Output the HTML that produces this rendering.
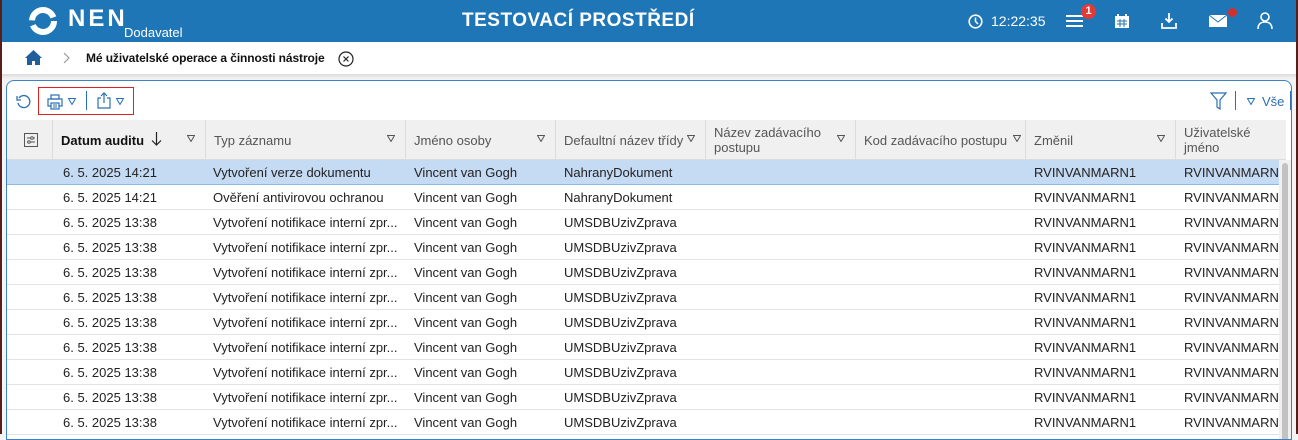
<!DOCTYPE html>
<html><head><meta charset="utf-8"><style>
*{box-sizing:border-box;margin:0;padding:0}
body{width:1298px;height:434px;overflow:hidden;background:#f4f4f4;font-family:"Liberation Sans",Arial,sans-serif;position:relative}
.edge{position:absolute;top:0;bottom:0;width:2px;background:#5a1e1a;z-index:9}
.hdr{position:absolute;left:0;top:0;width:1298px;height:42px;background:#1f76b7;color:#fff}
.bc{position:absolute;left:0;top:42px;width:1298px;height:32px;background:#fff;box-shadow:0 2px 4px rgba(0,0,0,.12)}
.panel{position:absolute;left:6px;top:80px;width:1286px;height:360px;background:#fff;border:1px solid #3d82c4;border-radius:8px 8px 0 0;overflow:hidden}
.h{position:absolute;top:39px;height:40px;background:#f0f0f0;border-right:1px solid #dcdcdc;border-bottom:1px solid #dcdcdc;font-size:13px;color:#555}
.h span{position:absolute;left:8px;top:13px}
.h svg.tri{position:absolute;right:10px;top:15px}
.row{position:absolute;left:0;width:1272px;height:25px;border-bottom:1px solid #e3e3e3}
.row span{position:absolute;top:5px;font-size:13px;color:#222;white-space:nowrap}
</style></head><body>
<div class="edge" style="left:0"></div><div class="edge" style="right:0"></div>
<div class="hdr">
 <svg style="position:absolute;left:28px;top:6px" width="30" height="30" viewBox="0 0 30 30"><circle cx="15" cy="15" r="11" fill="none" stroke="#fff" stroke-width="6" stroke-dasharray="30 5"/></svg>
 <div style="position:absolute;left:68px;top:5px;font-size:24px;font-weight:bold;letter-spacing:3px">NEN</div>
 <div style="position:absolute;left:124px;top:25px;font-size:13px">Dodavatel</div>
 <div style="position:absolute;left:462px;top:10px;font-size:19px;font-weight:bold;letter-spacing:.5px">TESTOVACÍ PROSTŘEDÍ</div>
 <svg style="position:absolute;left:968px;top:14px" width="15" height="15" viewBox="0 0 15 15"><circle cx="7.5" cy="7.5" r="6.3" fill="none" stroke="#fff" stroke-width="1.6"/><path d="M7.5 3.5v4l2.5 2.5" stroke="#fff" stroke-width="1.5" fill="none"/></svg>
 <div style="position:absolute;left:991px;top:13px;font-size:14px">12:22:35</div>
 <svg style="position:absolute;left:1066px;top:14px" width="17" height="14"><path d="M0 2h17M0 7h17M0 12h17" stroke="#fff" stroke-width="2"/></svg>
 <div style="position:absolute;left:1081px;top:4px;width:15px;height:15px;border-radius:50%;background:#e53935;font-size:11px;text-align:center;line-height:15px;font-weight:bold">1</div>
 <svg style="position:absolute;left:1114px;top:13px" width="16" height="16"><rect x="1" y="3" width="14" height="12" fill="#fff"/><path d="M4 1v3M12 1v3" stroke="#fff" stroke-width="2"/><path d="M3 8h10M3 11h10M6 6v8M10 6v8" stroke="#1f76b7" stroke-width="1"/></svg>
 <svg style="position:absolute;left:1161px;top:12px" width="16" height="17"><path d="M8 1v9M4.5 6.5L8 10l3.5-3.5M1 11v5h14v-5" stroke="#fff" stroke-width="1.8" fill="none"/></svg>
 <svg style="position:absolute;left:1209px;top:15px" width="18" height="12"><rect width="18" height="12" fill="#fff"/><path d="M0 0l9 7 9-7" stroke="#1f76b7" stroke-width="1" fill="none"/></svg>
 <div style="position:absolute;left:1228px;top:8px;width:9px;height:9px;border-radius:50%;background:#d32f2f"></div>
 <svg style="position:absolute;left:1257px;top:12px" width="16" height="17"><circle cx="8" cy="5" r="4" fill="none" stroke="#fff" stroke-width="1.6"/><path d="M1 17c0-5 3-7 7-7s7 2 7 7" fill="none" stroke="#fff" stroke-width="1.6"/></svg>
</div>
<div class="bc">
 <svg style="position:absolute;left:25px;top:8px" width="17" height="15"><path d="M8.5 0L0 8h2v7h5v-4h3v4h5V8h2z" fill="#1f5f9c"/></svg>
 <svg style="position:absolute;left:63px;top:10px" width="7" height="12"><path d="M1 1l5 5-5 5" fill="none" stroke="#999" stroke-width="1.2"/></svg>
 <div style="position:absolute;left:86px;top:9px;font-size:12px;font-weight:bold;color:#111;letter-spacing:-.1px">Mé uživatelské operace a činnosti nástroje</div>
 <svg style="position:absolute;left:338px;top:9px" width="16" height="16"><circle cx="8" cy="8" r="7" fill="none" stroke="#222" stroke-width="1.2"/><path d="M5.5 5.5l5 5M10.5 5.5l-5 5" stroke="#222" stroke-width="1.2"/></svg>
</div>
<div class="panel">
 <svg style="position:absolute;left:9px;top:13px" width="15" height="15"><path d="M3 4A6 6 0 1 1 2 9" fill="none" stroke="#2a6fb5" stroke-width="1.3"/><path d="M1 2v4h4" fill="none" stroke="#2a6fb5" stroke-width="1.3"/></svg>
 <div style="position:absolute;left:31px;top:6px;width:96px;height:28px;border:1px solid #e02020"></div>
 <svg style="position:absolute;left:40px;top:13px" width="16" height="16"><rect x="4" y="1" width="8" height="4" fill="none" stroke="#2a6fb5" stroke-width="1.2"/><rect x="1" y="5" width="14" height="7" fill="none" stroke="#2a6fb5" stroke-width="1.2"/><rect x="4" y="9" width="8" height="6" fill="#fff" stroke="#2a6fb5" stroke-width="1.2"/><path d="M6 11h4M6 13h4" stroke="#2a6fb5"/></svg>
 <svg style="position:absolute;left:61px;top:17px" width="8" height="7"><path d="M.5.5h7L4 6.5z" fill="none" stroke="#2a6fb5"/></svg>
 <div style="position:absolute;left:79px;top:10px;width:1px;height:19px;background:#2a6fb5"></div>
 <svg style="position:absolute;left:90px;top:11px" width="14" height="17"><path d="M4 6H1v10h12V6h-3M7 11V1M4 4l3-3 3 3" fill="none" stroke="#2a6fb5" stroke-width="1.2"/></svg>
 <svg style="position:absolute;left:109px;top:17px" width="8" height="7"><path d="M.5.5h7L4 6.5z" fill="none" stroke="#2a6fb5"/></svg>
 <svg style="position:absolute;left:1203px;top:11px" width="17" height="18"><path d="M1 1h15l-6 7v9l-3-2V8z" fill="none" stroke="#2a6fb5" stroke-width="1.2"/></svg>
 <div style="position:absolute;left:1228px;top:10px;width:1px;height:19px;background:#2a6fb5"></div>
 <svg style="position:absolute;left:1240px;top:17px" width="8" height="7"><path d="M.5.5h7L4 6.5z" fill="none" stroke="#2a6fb5"/></svg>
 <div style="position:absolute;left:1255px;top:13px;font-size:13px;color:#2a6fb5">Vše</div>
 <div style="position:absolute;left:1283px;top:10px;width:2px;height:19px;background:#2a6fb5"></div>

 <div class="h" style="left:0;width:46px"><svg style="position:absolute;left:17px;top:13px" width="14" height="14"><rect x=".5" y=".5" width="13" height="13" fill="none" stroke="#555"/><path d="M3 5h8M3 9h8" stroke="#555"/><circle cx="8" cy="5" r="1.3" fill="#fff" stroke="#555"/><circle cx="5" cy="9" r="1.3" fill="#fff" stroke="#555"/></svg></div>
 <div class="h" style="left:46px;width:153px"><span style="color:#111;font-weight:bold">Datum auditu</span><svg style="position:absolute;left:98px;top:12px" width="11" height="14"><path d="M5.5 0v13M1 8.5l4.5 4.5 4.5-4.5" fill="none" stroke="#222" stroke-width="1.2"/></svg><svg class="tri" width="8" height="7"><path d="M.5.5h7L4 6.5z" fill="none" stroke="#555"/></svg></div>
 <div class="h" style="left:199px;width:200px"><span>Typ záznamu</span><svg class="tri" width="8" height="7"><path d="M.5.5h7L4 6.5z" fill="none" stroke="#555"/></svg></div>
 <div class="h" style="left:399px;width:150px"><span>Jméno osoby</span><svg class="tri" width="8" height="7"><path d="M.5.5h7L4 6.5z" fill="none" stroke="#555"/></svg></div>
 <div class="h" style="left:549px;width:150px"><span>Defaultní název třídy</span><svg class="tri" width="8" height="7"><path d="M.5.5h7L4 6.5z" fill="none" stroke="#555"/></svg></div>
 <div class="h" style="left:699px;width:150px"><span style="top:5px;line-height:15px">Název zadávacího<br>postupu</span><svg class="tri" width="8" height="7"><path d="M.5.5h7L4 6.5z" fill="none" stroke="#555"/></svg></div>
 <div class="h" style="left:849px;width:170px"><span>Kod zadávacího postupu</span><svg class="tri" style="right:4px" width="8" height="7"><path d="M.5.5h7L4 6.5z" fill="none" stroke="#555"/></svg></div>
 <div class="h" style="left:1019px;width:150px"><span>Změnil</span><svg class="tri" width="8" height="7"><path d="M.5.5h7L4 6.5z" fill="none" stroke="#555"/></svg></div>
 <div class="h" style="left:1169px;width:110px;border-right:none"><span style="top:5px;line-height:15px">Uživatelské<br>jméno</span></div>

 <div id="rows"></div>
 <div style="position:absolute;left:1272px;top:79px;width:13px;height:290px;background:#f0f0f0"></div>
 <div style="position:absolute;left:1275px;top:82px;width:6px;height:290px;background:#c2c2c2;border-radius:3px"></div>
</div>
<script>
var d=[["6. 5. 2025 14:21","Vytvoření verze dokumentu","NahranyDokument"],["6. 5. 2025 14:21","Ověření antivirovou ochranou","NahranyDokument"]];
for(var i=0;i<9;i++)d.push(["6. 5. 2025 13:38","Vytvoření notifikace interní zpr...","UMSDBUzivZprava"]);
var h="";d.forEach(function(r,i){var sel=i==0;h+='<div class="row" style="top:'+(79+i*25)+'px;'+(sel?'background:#c5daf3;border-bottom:1px solid #8db8e8':'')+'"><span style="left:56px">'+r[0]+'</span><span style="left:206px">'+r[1]+'</span><span style="left:407px">Vincent van Gogh</span><span style="left:557px">'+r[2]+'</span><span style="left:1027px">RVINVANMARN1</span><span style="left:1177px">RVINVANMARN1</span></div>'});
document.getElementById("rows").innerHTML=h;
</script>
</body></html>
